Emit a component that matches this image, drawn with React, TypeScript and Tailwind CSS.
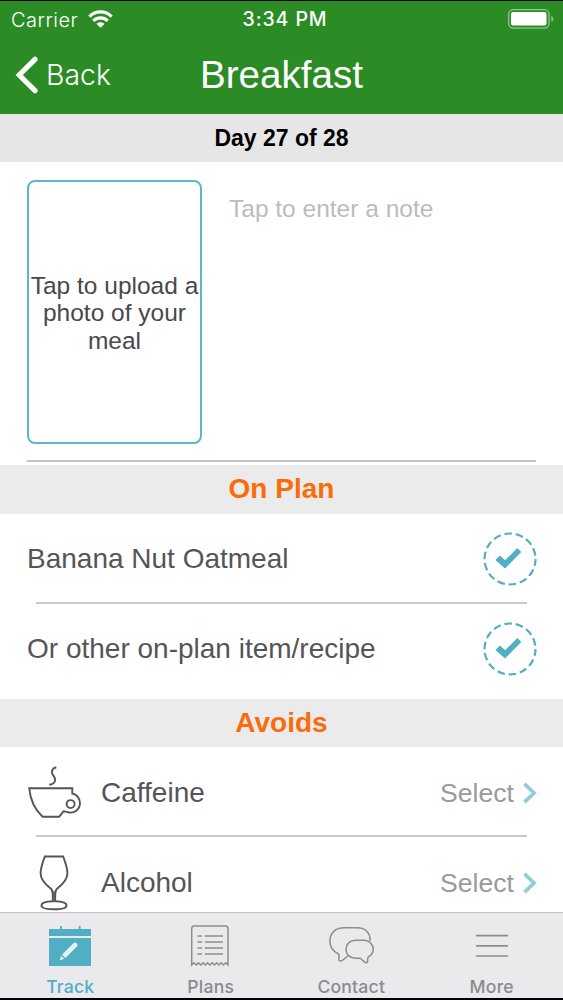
import type { ReactNode } from 'react'

const onPlanItems = ['Banana Nut Oatmeal', 'Or other on-plan item/recipe']

function StatusBar() {
  return (
    <div className="grid h-[37px] grid-cols-[1fr_auto_1fr] items-center pl-[11px] pr-[9px] font-['Inter',sans-serif] text-[19.5px] leading-none">
      <div className="flex items-center gap-[10px]">
        <span className="text-[20px] font-light tracking-[0.5px]">Carrier</span>
        <svg className="-mt-[2px]" width="25" height="18" viewBox="0 0 25 18" fill="none" stroke="#fff" strokeWidth="3.2">
          <path d="M1.4 6.6C7.6 0.4 17.4 0.4 23.6 6.6" />
          <path d="M5.2 10.9C9.4 6.9 15.6 6.9 19.8 10.9" />
          <path d="M8.4 13.8C10.7 11.7 14.3 11.7 16.6 13.8L12.5 17.8Z" fill="#fff" stroke="none" />
        </svg>
      </div>
      <span className="pl-[5px] pt-px font-medium tracking-[0.9px]">3:34 PM</span>
      <svg className="-mt-[2px] justify-self-end" width="46" height="20" viewBox="0 0 46 20">
        <rect x="0.7" y="0.7" width="40.3" height="18.4" rx="4.5" fill="none" stroke="#8fc68f" strokeWidth="1.3" />
        <rect x="3" y="3" width="35.5" height="13.6" rx="2" fill="#fff" />
        <path d="M43.3 7C46 8 46 12 43.3 13Z" fill="#8fc68f" />
      </svg>
    </div>
  )
}

function Header() {
  return (
    <header className="h-[114px] shrink-0 border-t border-black bg-[#2b8c26] text-white">
      <StatusBar />
      <div className="grid h-[74px] grid-cols-[1fr_auto_1fr] items-center">
        <button className="flex items-center gap-[8px] pl-[15px]">
          <svg width="23" height="38" viewBox="0 0 23 38" fill="none" stroke="#fff" strokeWidth="5.2" strokeLinecap="round" strokeLinejoin="miter">
            <path d="M20 3.3L4.2 19L20 34.7" />
          </svg>
          <span className="pt-px font-['Inter',sans-serif] text-[28.3px] font-light leading-none tracking-[0.1px]">Back</span>
        </button>
        <h1 className="pt-px text-[38.6px] leading-none">Breakfast</h1>
      </div>
    </header>
  )
}

function SectionTitle({ children }: { children: ReactNode }) {
  return (
    <h2 className="flex h-[49px] shrink-0 items-center justify-center bg-[#ebebeb] pb-px text-[28px] font-bold leading-none text-[#fa6b0a]">
      {children}
    </h2>
  )
}

function Divider() {
  return <div className="mx-[36px] h-[2px] shrink-0 bg-[#c9c9cb]" />
}

function CheckCircle() {
  return (
    <svg width="54" height="54" viewBox="0 0 54 54" fill="none">
      <circle cx="27" cy="27" r="25.5" stroke="#50aec5" strokeWidth="2.2" strokeDasharray="7.6 3.845" strokeDashoffset="0.7" />
      <path d="M12.4 28L16.9 23.5L22.2 28.2L34.3 16L38.3 20.1L22 36.5Z" fill="#50aec5" />
    </svg>
  )
}

function CupIcon() {
  return (
    <svg width="54" height="54" viewBox="0 0 54 54" fill="none" stroke="#555557" strokeWidth="1.9">
      <path d="M1.2 22.2H44.3V27.5C48.8 28.3 52 32.5 52 37C52 43.3 46.5 47.5 41 46.5C38.5 46.1 37 45.4 35.6 45.2L31.2 50.7H14.6C5.5 42.5 2.3 34 1.2 22.2Z" />
      <circle cx="42.6" cy="38.1" r="4" />
      <path d="M28.3 1.3C24 2.2 22.6 5.8 25.1 9.2C28.8 14 27.1 18 21.3 18.8" />
    </svg>
  )
}

function GlassIcon() {
  return (
    <svg width="54" height="56" viewBox="0 0 54 56" fill="none" stroke="#555557" strokeWidth="1.9">
      <path d="M16.8 1.5H35.2C37 7 39.4 12 39.4 18.5C39.4 26 31.7 31.5 29 33.8C26.8 35.7 27.2 38.5 27.2 46.3C33 46.5 38.6 47.7 38.6 50.5C38.6 53 33 54.3 26 54.3C19 54.3 13.4 53 13.4 50.5C13.4 47.7 19 46.5 24.8 46.3C24.8 38.5 25.2 35.7 23 33.8C20.3 31.5 12.6 26 12.6 18.5C12.6 12 15 7 16.8 1.5Z" />
      <path d="M26 36V47" strokeWidth="1.4" />
    </svg>
  )
}

function AvoidRow({ icon, label }: { icon: ReactNode; label: string }) {
  return (
    <div className="flex h-[88px] shrink-0 items-center pl-[28px] pr-[26px] pt-[3px]">
      <span className="w-[73px]">{icon}</span>
      <span className="flex-1 pt-px text-[28px] leading-none text-[#555557]">{label}</span>
      <button className="flex items-center gap-[9px]">
        <span className="pt-px text-[26.6px] leading-none text-[#9a9a9e]">Select</span>
        <svg width="14" height="22" viewBox="0 0 14 22" fill="none" stroke="#90cfda" strokeWidth="3.8">
          <path d="M1.5 1.8L11 11L1.5 20.2" />
        </svg>
      </button>
    </div>
  )
}

function TabBar() {
  const tabs = [
    {
      label: 'Track',
      icon: (
        <svg width="46" height="44" viewBox="0 0 46 44">
          <path d="M2 5H44V12H2ZM2 14H44V42H2Z" fill="#50aec5" />
          <path d="M14 2V6M32.7 2V6" stroke="#50aec5" strokeWidth="1.8" />
          <path d="M26.5 19.2Q28 17.7 29.7 19.2Q31.3 20.8 30 22.4L18.4 34L14.9 30.8Z" fill="#e6f3f6" />
          <path d="M14 31.8L17.2 34.8L12.8 36.3Z" fill="#e6f3f6" />
        </svg>
      ),
    },
    {
      label: 'Plans',
      icon: (
        <svg className="-translate-x-px" width="46" height="44" viewBox="0 0 46 44" fill="none" stroke="#8d8d90" strokeWidth="1.5">
          <path d="M4.7 41V4.7Q4.7 2 7.4 2H38.3Q41 2 41 4.7V41L38.7 38.7L36.5 41L34.2 38.7L32 41L29.7 38.7L27.4 41L25.2 38.7L22.9 41L20.6 38.7L18.3 41L16.1 38.7L13.8 41L11.5 38.7L9.3 41L7 38.7Z" />
          <path d="M10.5 12H15M17.8 12H36M10.5 18H15M17.8 18H36M10.5 24H15M17.8 24H36M10.5 30H15M17.8 30H36" />
        </svg>
      ),
    },
    {
      label: 'Contact',
      icon: (
        <svg width="46" height="44" viewBox="0 0 46 44" fill="none" stroke="#8d8d90" strokeWidth="1.5">
          <path d="M20 31.8C17.3 33.5 15.5 37 12.3 37C10.4 37 10.6 34.8 11 32.8C11.2 31.2 11 30 9.5 29.3C4.5 26.7 1.9 22.3 1.9 17C1.9 8.8 7.8 3.8 16 3.8H29.5C37.3 3.8 42.2 8.8 42.2 17" />
          <path d="M27.7 16.3H35.4C41.5 16.3 45.2 20.5 45.2 25.3C45.2 28.5 43.5 31 40.8 32.7C39.2 33.7 39.4 35.3 39.6 36.7C39.8 38.3 38.9 39.1 37.4 38.5C35.2 37.6 33.8 34.7 31.8 34.2H27.7C21.5 34.2 18 30.4 18 25.3C18 20.1 21.8 16.3 27.7 16.3Z" />
        </svg>
      ),
    },
    {
      label: 'More',
      icon: (
        <svg width="46" height="44" viewBox="0 0 46 44" stroke="#8d8d90" strokeWidth="1.7">
          <path d="M7 11.6H39M7 21.8H39M7 32H39" />
        </svg>
      ),
    },
  ]

  return (
    <nav className="grid h-[88px] shrink-0 grid-cols-4 border-b-2 border-t border-t-[#c3c3c5] border-b-black bg-[#eae9eb] pr-px font-['Inter',sans-serif] text-[17.6px] font-medium text-[#8b8b8e]">
      {tabs.map((tab, i) => (
        <button key={tab.label} className={`flex flex-col items-center pt-[11px] ${i === 0 ? 'text-[#50aec5]' : ''}`}>
          {tab.icon}
          <span className="mt-[10px] leading-none tracking-[0.2px]">{tab.label}</span>
        </button>
      ))}
    </nav>
  )
}

export default function App() {
  return (
    <div className="flex h-[1000px] w-[563px] flex-col overflow-hidden bg-white font-['Liberation_Sans',Arial,sans-serif]">
      <Header />

      <main className="flex min-h-0 flex-1 flex-col overflow-hidden">
        <div className="flex h-[48px] shrink-0 items-center justify-center bg-[#e7e6e7] text-[23px] font-bold leading-none text-black">
          Day 27 of 28
        </div>

        {/* Photo and note */}
        <section className="flex h-[303px] shrink-0 flex-col px-[27px] pt-[18px]">
          <div className="flex gap-[27px]">
            <button className="h-[264px] w-[175px] rounded-[8px] border-2 border-[#5fb5ca] pt-[2px] text-center text-[24.5px] leading-[27.3px] text-[#48484a]">
              <span className="-mx-1 block">Tap to upload a<br />photo of your<br />meal</span>
            </button>
            <p className="pt-[17px] text-[24.5px] leading-[24px] text-[#bbbbbf]">Tap to enter a note</p>
          </div>
          <div className="mt-[16px] h-[2px] bg-[#c4c4c5]" />
        </section>

        <SectionTitle>On Plan</SectionTitle>
        <section className="flex h-[185px] shrink-0 flex-col">
          {onPlanItems.map((item, i) => (
            <div key={item}>
              {i > 0 && <Divider />}
              <div className="flex h-[88px] items-center justify-between pl-[27px] pr-[26px] pt-px text-[28px] leading-none text-[#555557]">
                <span>{item}</span>
                <CheckCircle />
              </div>
            </div>
          ))}
        </section>

        <SectionTitle>Avoids</SectionTitle>
        <div className="-mt-px flex flex-col bg-white">
          <AvoidRow icon={<CupIcon />} label="Caffeine" />
          <Divider />
          <AvoidRow icon={<GlassIcon />} label="Alcohol" />
        </div>
      </main>

      <TabBar />
    </div>
  )
}
